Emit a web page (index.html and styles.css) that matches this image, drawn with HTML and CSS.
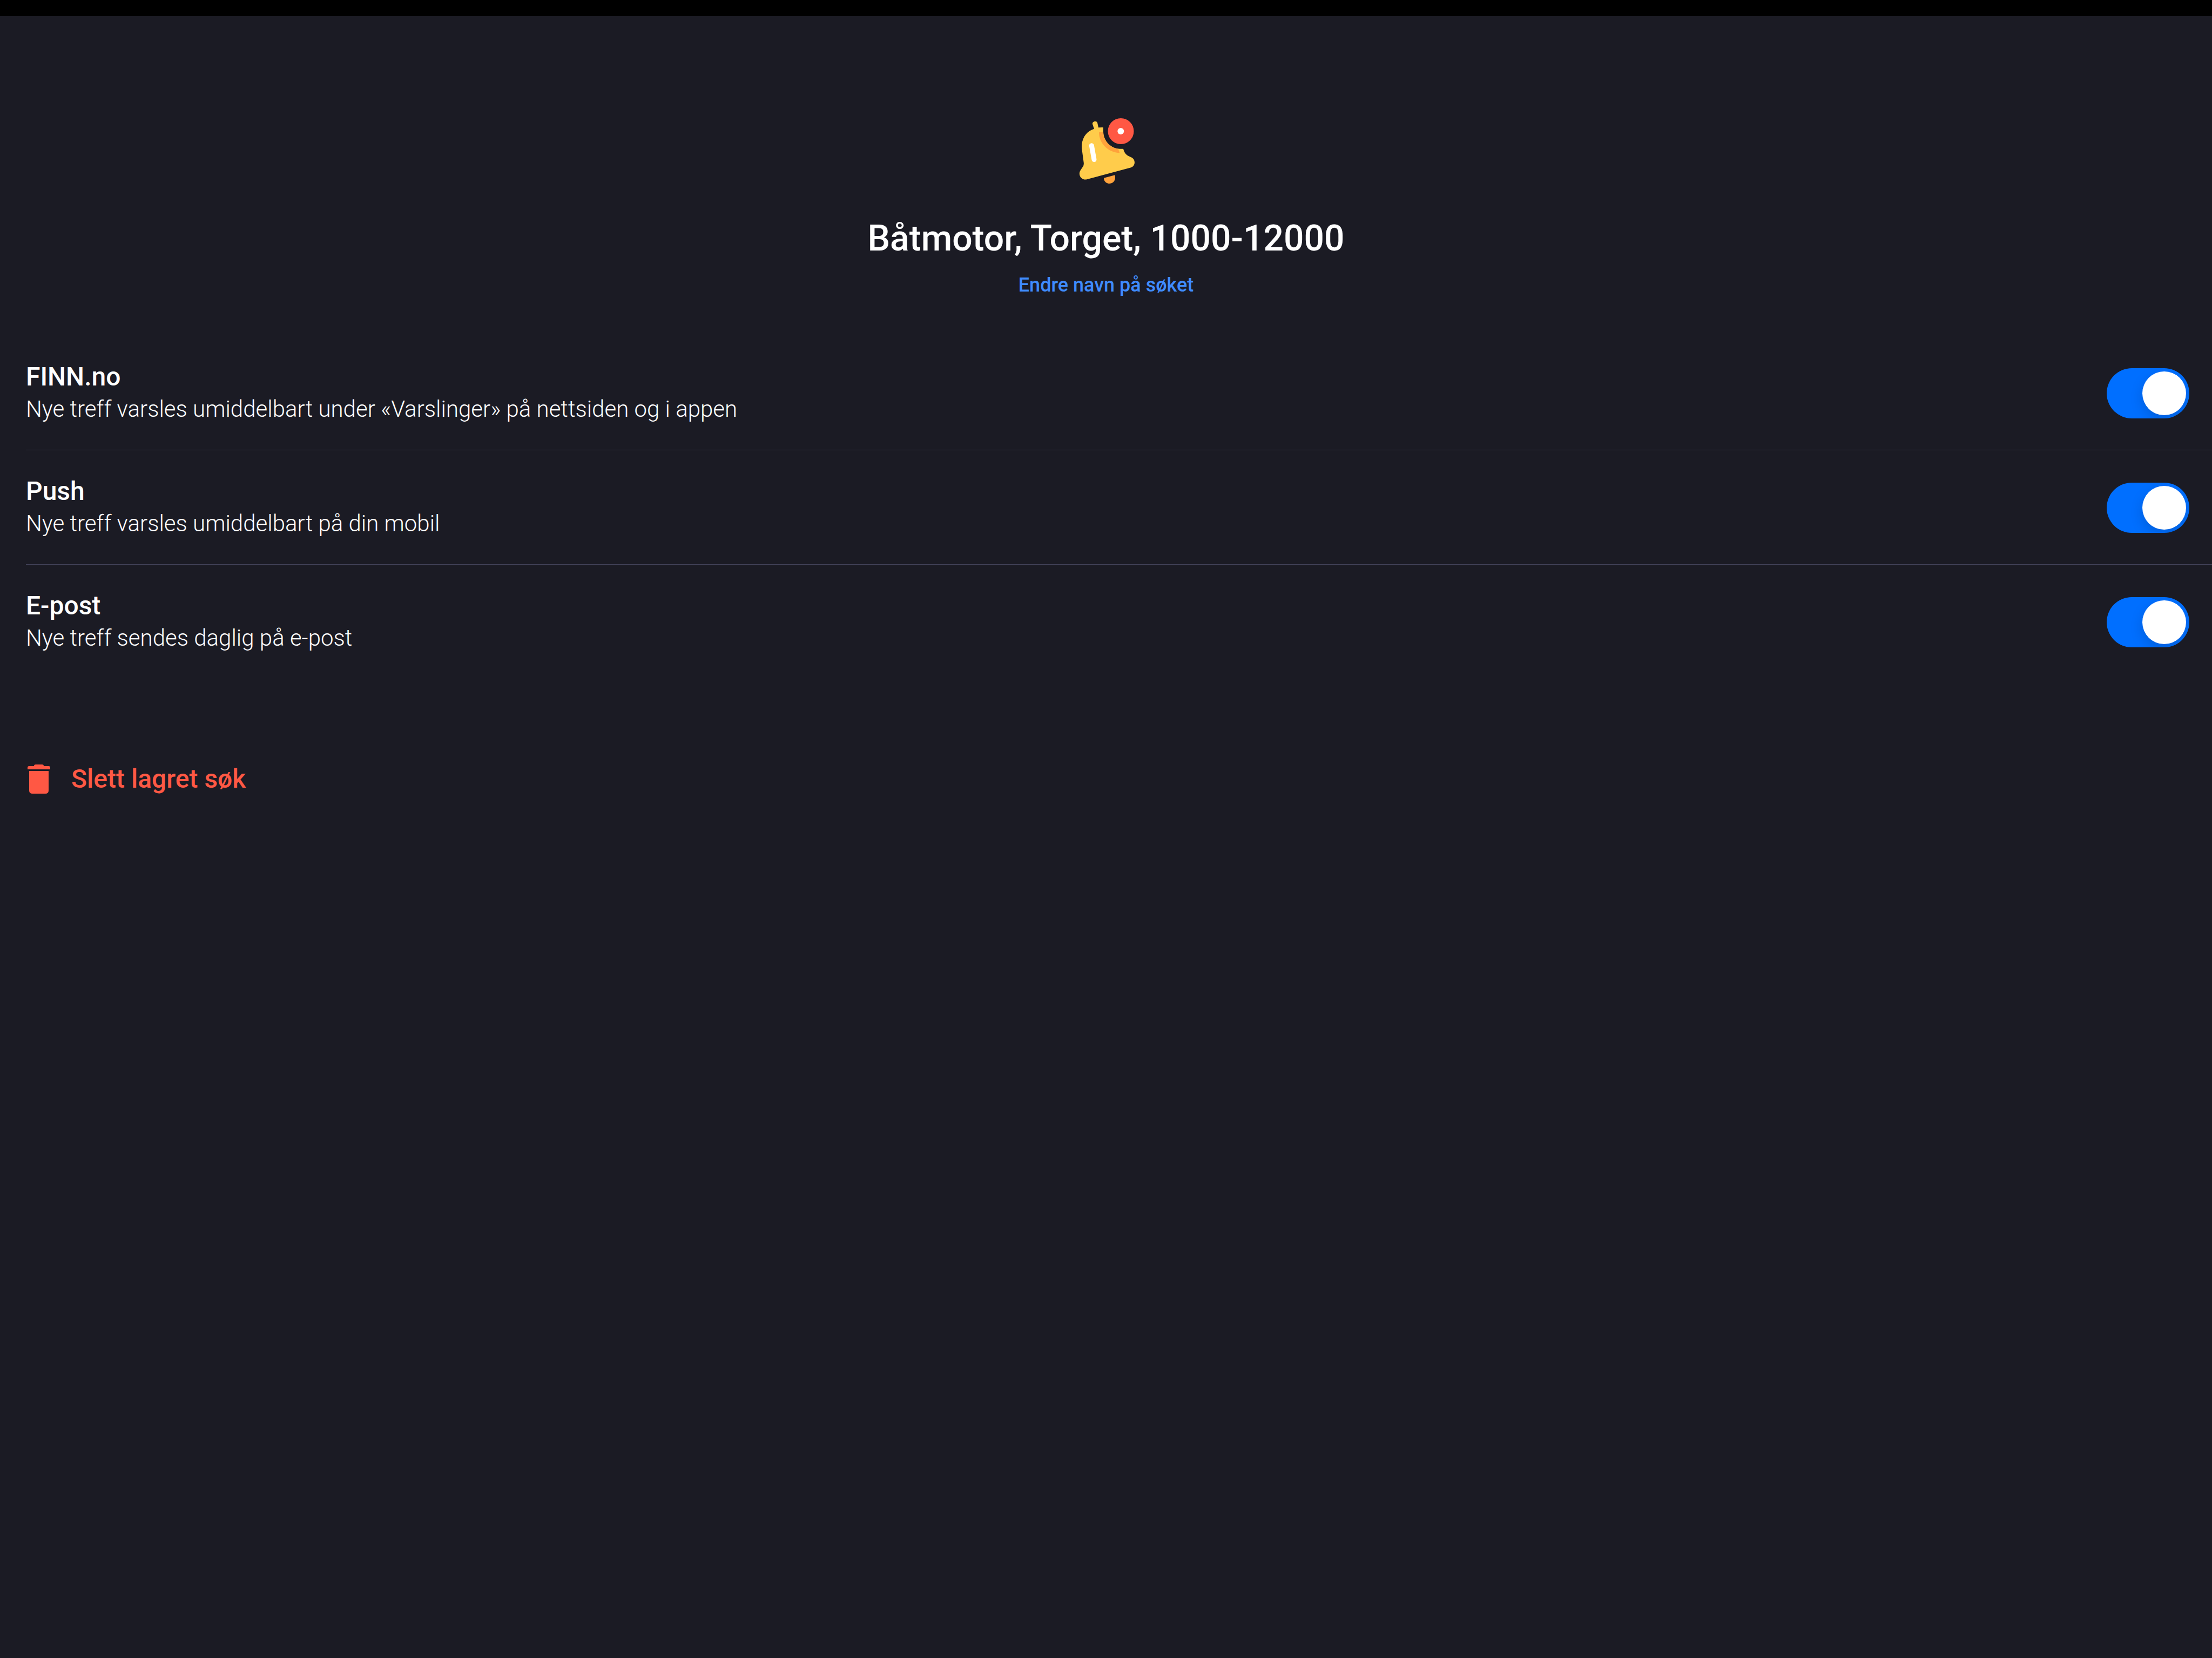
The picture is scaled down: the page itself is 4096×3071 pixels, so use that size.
FILE: index.html
```
<!DOCTYPE html>
<html lang="nb">
<head>
  <meta charset="utf-8">
  <meta name="viewport" content="width=device-width, initial-scale=1">
  <title>Båtmotor, Torget, 1000-12000</title>
  <link rel="stylesheet" href="styles.css">
</head>
<body>
  <main class="page">
    <header class="search-header">
      <svg class="bell" viewBox="-3 0 480 480" aria-hidden="true">
        <path fill="#ffcc4b" d="M162 89C159 74 186 68 189 82L195 109Q208 107 222 108V132C222 183 264 226 314 227L333 227C338 246 347 260 364 268L381 276C402 288 401 322 376 331L130 397C98 402 79 370 96 345L110 324Q115 315 113 302L103 228C97 177 124 130 171 116Z"/>
        <path fill="#ffa23b" d="M198 135H222C223 183 261 224 305 227L313 250C251 248 198 198 198 135Z"/>
        <path fill="none" stroke="#fff" stroke-width="27" stroke-linecap="round" d="M157 209L171 287"/>
        <path fill="#ffa23b" d="M225 389L286 373C293 397 281 420 257 420C239 420 225 407 225 389Z"/>
        <circle cx="319.500" cy="129" r="72" fill="#ff5844"/>
        <circle cx="319" cy="129" r="18" fill="#fff"/>
      </svg>
      <h1 class="title">Båtmotor, Torget, 1000-12000</h1>
      <a class="rename" href="#rename">Endre navn på søket</a>
    </header>

    <ul class="channels">
      <li class="channel">
        <label class="channel-text" for="channel-finn">
          <span class="channel-name">FINN.no</span>
          <span class="channel-info">Nye treff varsles umiddelbart under «Varslinger» på nettsiden og i appen</span>
        </label>
        <input class="switch" type="checkbox" role="switch" id="channel-finn" checked>
      </li>
      <li class="channel">
        <label class="channel-text" for="channel-push">
          <span class="channel-name">Push</span>
          <span class="channel-info">Nye treff varsles umiddelbart på din mobil</span>
        </label>
        <input class="switch" type="checkbox" role="switch" id="channel-push" checked>
      </li>
      <li class="channel">
        <label class="channel-text" for="channel-email">
          <span class="channel-name">E-post</span>
          <span class="channel-info">Nye treff sendes daglig på e-post</span>
        </label>
        <input class="switch" type="checkbox" role="switch" id="channel-email" checked>
      </li>
    </ul>

    <button class="delete" type="button">
      <svg class="trash" viewBox="0 0 48 54" aria-hidden="true">
        <path fill="currentColor" d="M3 9V6Q3 3 6 3H15Q15 0 18 0H30Q33 0 33 3H42Q45 3 45 6V9ZM6 12H42V48Q42 54 36 54H12Q6 54 6 48Z"/>
      </svg>
      Slett lagret søk
    </button>
  </main>
</body>
</html>
```
FILE: styles.css
```
* {
  box-sizing: border-box;
}

body {
  margin: 0;
  min-height: 100vh;
  border-top: 30px solid #000;
  background: #1b1b24;
  color: #fff;
  font-family: Roboto, "Liberation Sans", sans-serif;
}

.page {
  display: flex;
  flex-direction: column;
  padding-left: 48px;
}

.search-header {
  display: flex;
  flex-direction: column;
  align-items: center;
  padding: 170px 48px 70px 0;
}

.bell {
  width: 160px;
  height: 160px;
}

.title {
  margin: 42px 0 22px;
  font-size: 66px;
  font-weight: 500;
  line-height: 80px;
}

.rename {
  color: #3f8bff;
  font-size: 36px;
  font-weight: 500;
  line-height: 48px;
  text-decoration: none;
}

.channels {
  margin: 0;
  padding: 0;
  list-style: none;
}

.channel {
  display: flex;
  align-items: center;
  justify-content: space-between;
  gap: 48px;
  padding: 46px 42px 45px 0;
}

.channel + .channel {
  border-top: 1px solid #434359;
}

.channel-text {
  display: flex;
  flex-direction: column;
  line-height: 60px;
}

.channel-name {
  font-size: 48px;
  font-weight: 500;
}

.channel-info {
  font-size: 42px;
  font-weight: 300;
}

.switch {
  display: flex;
  flex-shrink: 0;
  align-items: center;
  width: 153px;
  height: 93px;
  margin: 0;
  padding: 6px;
  overflow: hidden;
  border-radius: 47px;
  background: #39394a;
  appearance: none;
}

.switch::before {
  content: "";
  width: 81px;
  height: 81px;
  border-radius: 50%;
  background: #fff;
  box-shadow: 0 9px 24px rgba(0, 0, 0, 0.15);
}

.switch:checked {
  justify-content: flex-end;
  background: #006fff;
}

.delete {
  display: flex;
  align-items: center;
  align-self: flex-start;
  gap: 36px;
  margin: 156px 0 0;
  padding: 0;
  border: 0;
  background: none;
  color: #ff5844;
  font-family: inherit;
  font-size: 48px;
  font-weight: 500;
  line-height: 60px;
}

.trash {
  width: 48px;
  height: 54px;
}
```
